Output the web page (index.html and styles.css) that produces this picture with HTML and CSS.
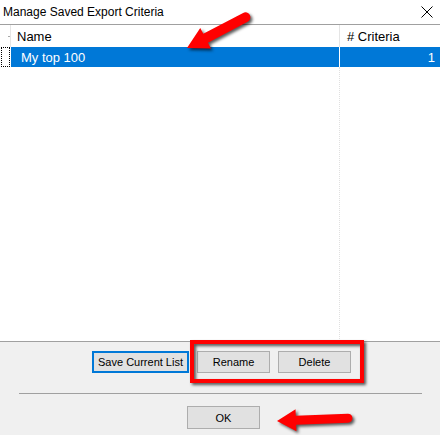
FILE: index.html
```html
<!doctype html>
<html lang="en">
<head>
    <meta charset="UTF-8">
    <title>Manage Saved Export Criteria</title>
    <link rel="stylesheet" href="styles.css">
</head>
<body>
    <div class="dialog">
        <!--标题栏-->
        <div class="titleBar">
            <span class="title">Manage Saved Export Criteria</span>
            <svg class="close" width="12" height="12" viewBox="0 0 12 12">
                <path d="M0.5 0.5 L11.5 11.5 M11.5 0.5 L0.5 11.5" stroke="#000" stroke-width="1" fill="none"/>
            </svg>
        </div>

        <!--列表-->
        <div class="grid">
            <div class="gridHead">
                <div class="rowHead"><span class="sortMark"></span></div>
                <div class="cell colName">Name</div>
                <div class="cell colCount">#&nbsp;Criteria</div>
            </div>
            <div class="gridRow on">
                <div class="rowHead"><span class="focus"></span></div>
                <div class="cell colName">My top 100</div>
                <div class="cell colCount num">1</div>
            </div>
            <div class="gridFill">
                <div class="rowHead blank"></div>
                <div class="colName"></div>
                <div class="colCount"></div>
            </div>
        </div>

        <!--按钮区-->
        <div class="panel">
            <div class="btnRow">
                <button class="btn default">Save Current List</button>
                <button class="btn">Rename</button>
                <button class="btn">Delete</button>
            </div>
            <div class="sep"></div>
            <div class="okRow">
                <button class="btn ok">OK</button>
            </div>
        </div>
    </div>

    <!--标注-->
    <svg class="marks" width="440" height="435" viewBox="0 0 440 435">
        <rect x="192" y="342" width="170" height="39" fill="none" stroke="#ff0000" stroke-width="4"/>
        <g transform="translate(187 48) rotate(-27.7)">
            <path d="M0 0 L21 -11.5 L21 -5 L66 -5 A5 5 0 0 1 66 5 L21 5 L21 11.5 Z" fill="#ff0000"/>
        </g>
        <g transform="translate(277 421) rotate(-2.3)">
            <path d="M0 0 L19 -11 L19 -4.5 L71 -4.5 A4.5 4.5 0 0 1 71 4.5 L19 4.5 L19 11 Z" fill="#ff0000"/>
        </g>
    </svg>
</body>
</html>
```

FILE: styles.css
```css
*{
    padding: 0;
    margin: 0;
    box-sizing: border-box;
}
html,body{
    width: 440px;
    height: 435px;
    overflow: hidden;
}
body{
    position: relative;
    font-family: "Liberation Sans", Arial, sans-serif;
    font-size: 12px;
    color: #000;
    background: #f0f0f0;
}
.dialog{
    display: flex;
    flex-direction: column;
    height: 100%;
}

/* 标题栏 */
.titleBar{
    height: 25px;
    background: #fff;
    border-bottom: 1px solid #a0a0a0;
    display: flex;
    align-items: center;
    justify-content: space-between;
    padding: 0 7px 1px 3px;
}
.title{
    font-size: 12px;
}
.close{
    display: block;
}

/* 列表 */
.grid{
    height: 317px;
    background: #fff;
    border-bottom: 1px solid #a0a0a0;
    display: flex;
    flex-direction: column;
}
.gridHead,.gridRow,.gridFill{
    display: flex;
}
.gridHead{
    height: 22px;
}
.gridRow{
    height: 20px;
}
.gridFill{
    flex: 1;
}
.rowHead{
    width: 11px;
    position: relative;
    border-right: 1px solid #e5e5e5;
}
.rowHead.blank{
    border-right: none;
}
.gridRow .rowHead{
    border-right: none;
    background: #fff;
}
.sortMark{
    position: absolute;
    left: 8px;
    top: 11px;
    width: 2px;
    height: 1px;
    background: #a8a8a8;
}
.focus{
    position: absolute;
    left: 1px;
    top: 0;
    width: 9px;
    height: 20px;
    border: 1px dotted #000;
}
.cell{
    display: flex;
    align-items: center;
    font-size: 13px;
    white-space: nowrap;
}
.colName{
    width: 329px;
    border-right: 1px solid #e5e5e5;
}
.colCount{
    flex: 1;
}
.gridHead .colName{
    padding-left: 6px;
}
.gridHead .colCount{
    padding-left: 7px;
}
.gridRow.on .cell{
    background: #0078d7;
    color: #fff;
}
.gridRow .colName{
    padding-left: 10px;
    border-right: 1px solid #fff;
}
.gridRow .num{
    justify-content: flex-end;
    padding-right: 5px;
}
.gridFill .colName{
    border-right: 1px dotted #e0e0e0;
}

/* 按钮区 */
.panel{
    flex: 1;
    display: flex;
    flex-direction: column;
    padding-top: 9px;
}
.btnRow{
    display: flex;
    justify-content: center;
    gap: 8px;
    padding-left: 3px;
}
.btn{
    height: 22px;
    width: 73px;
    background: #e1e1e1;
    border: 1px solid #adadad;
    font-family: "Liberation Sans", Arial, sans-serif;
    font-size: 11px;
    color: #000;
}
.btn.default{
    width: 97px;
    border: 2px solid #0078d7;
}
.sep{
    height: 1px;
    margin: 20px 18px 0 19px;
    background: #a0a0a0;
}
.okRow{
    display: flex;
    justify-content: center;
    padding-top: 12px;
    padding-left: 7px;
}
.btn.ok{
    height: 23px;
}

/* 标注层 */
.marks{
    position: absolute;
    left: 0;
    top: 0;
    pointer-events: none;
    filter: drop-shadow(2px 2px 1.5px rgba(0,0,0,0.65));
}
```
